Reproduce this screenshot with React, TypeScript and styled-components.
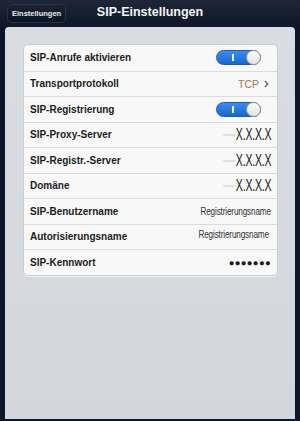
import React from "react";
import styled, { createGlobalStyle } from "styled-components";

const Global = createGlobalStyle`
  html, body { margin: 0; padding: 0; }
  body {
    width: 300px;
    height: 421px;
    overflow: hidden;
    background: #0d1629;
    font-family: "Liberation Sans", Arial, sans-serif;
  }
`;

type Row = {
  label: string;
  kind: "switch" | "link" | "ip" | "text" | "password";
  value?: string;
  raised?: boolean;
  trace?: boolean;
};

const rows: Row[] = [
  { label: "SIP-Anrufe aktivieren", kind: "switch" },
  { label: "Transportprotokoll", kind: "link", value: "TCP" },
  { label: "SIP-Registrierung", kind: "switch" },
  { label: "SIP-Proxy-Server", kind: "ip", value: "X.X.X.X", trace: true },
  { label: "SIP-Registr.-Server", kind: "ip", value: "X.X.X.X", trace: true },
  { label: "Domäne", kind: "ip", value: "X.X.X.X", trace: true },
  { label: "SIP-Benutzername", kind: "text", value: "Registrierungsname" },
  { label: "Autorisierungsname", kind: "text", value: "Registrierungsname", raised: true },
  { label: "SIP-Kennwort", kind: "password", value: "●●●●●●●" },
];

const App = () => {
  return (
    <S.Screen>
      <Global />
      <S.NavBar>
        <S.BackButton>Einstellungen</S.BackButton>
        <S.Title>SIP-Einstellungen</S.Title>
      </S.NavBar>
      <S.Panel>
        <S.Group>
          {rows.map((row) => (
            <S.Cell key={row.label}>
              <S.Label>{row.label}</S.Label>
              {row.kind === "switch" && (
                <S.Switch>
                  <S.SwitchMark />
                  <S.Knob />
                </S.Switch>
              )}
              {row.kind === "link" && (
                <S.LinkValue>
                  {row.value}
                  <S.Chevron viewBox="0 0 6 9">
                    <path d="M1 1 L4.5 4.5 L1 8" fill="none" stroke="#6b6b6b" strokeWidth="1.8" />
                  </S.Chevron>
                </S.LinkValue>
              )}
              {row.kind === "ip" && (
                <S.IpField>
                  {row.trace && <S.FieldTrace />}
                  <S.IpValue>{row.value}</S.IpValue>
                </S.IpField>
              )}
              {row.kind === "text" && <S.TextValue $raised={row.raised}>{row.value}</S.TextValue>}
              {row.kind === "password" && <S.Password>{row.value}</S.Password>}
            </S.Cell>
          ))}
        </S.Group>
      </S.Panel>
    </S.Screen>
  );
};

export default App;

const S = {
  Screen: styled.div`
    width: 300px;
    height: 421px;
    display: flex;
    flex-direction: column;
    background: #0d1629;
  `,
  NavBar: styled.div`
    height: 27px;
    flex-shrink: 0;
    display: flex;
    align-items: center;
    position: relative;
    padding: 0 0 0 7px;
    background: linear-gradient(#1f2737, #0e1627);
  `,
  BackButton: styled.div`
    height: 17px;
    padding: 0 4px;
    display: flex;
    align-items: center;
    border-radius: 5px;
    border: 1px solid #2a3344;
    background: linear-gradient(#1c2434, #0c1322);
    color: #e8ecf2;
    font-size: 7.5px;
    font-weight: bold;
  `,
  Title: styled.div`
    position: absolute;
    left: 0;
    right: 0;
    top: 5px;
    text-align: center;
    color: #f4f6fa;
    font-size: 12.5px;
    font-weight: bold;
    pointer-events: none;
  `,
  Panel: styled.div`
    flex: 1;
    margin: 0 5px 2px 5px;
    padding: 17px 17px 0 18px;
    border-radius: 4px 4px 0 0;
    background: linear-gradient(#d9dce1, #d3d6db);
  `,
  Group: styled.div`
    background: #f8f8f8;
    border-radius: 5px;
    border: 1px solid #c9ccd1;
    box-shadow: 0 1px 0 #eef0f2;
    overflow: hidden;
  `,
  Cell: styled.div`
    height: 25.5px;
    display: flex;
    align-items: center;
    justify-content: space-between;
    padding: 0 6px 0 6px;
    border-top: 1px solid #dcdcdc;
    box-sizing: border-box;
    &:first-child {
      border-top: none;
    }
  `,
  Label: styled.span`
    font-size: 10px;
    font-weight: bold;
    color: #1c1c1c;
  `,
  Switch: styled.div`
    width: 45px;
    height: 15px;
    margin-right: 10px;
    border-radius: 8px;
    position: relative;
    background: linear-gradient(#3c8df0, #1566d2);
    border: 1px solid #1a5cb8;
    box-sizing: border-box;
  `,
  SwitchMark: styled.div`
    position: absolute;
    left: 15px;
    top: 3px;
    width: 1.5px;
    height: 7px;
    background: #ffffff;
  `,
  Knob: styled.div`
    position: absolute;
    right: -1px;
    top: -1px;
    width: 15px;
    height: 15px;
    border-radius: 50%;
    background: linear-gradient(#ffffff, #e2e2e2);
    border: 1px solid #9a9a9a;
    box-sizing: border-box;
  `,
  LinkValue: styled.span`
    display: flex;
    align-items: center;
    gap: 5px;
    font-size: 10.5px;
    color: #a57a45;
    margin-right: 2px;
  `,
  Chevron: styled.svg`
    width: 5px;
    height: 8px;
  `,
  IpField: styled.div`
    display: flex;
    align-items: center;
  `,
  FieldTrace: styled.div`
    width: 13px;
    height: 2px;
    background: #e0e0e0;
    border-radius: 1px;
    margin-top: 1px;
  `,
  IpValue: styled.span`
    display: inline-block;
    font-size: 17px;
    line-height: 17px;
    color: #222;
    transform: scaleX(0.62);
    transform-origin: right center;
    letter-spacing: -0.3px;
    margin-left: -22px;
  `,
  TextValue: styled.span<{ $raised?: boolean }>`
    display: inline-block;
    font-size: 10px;
    color: #333;
    transform: scaleX(0.82);
    transform-origin: right center;
    margin-right: ${(p) => (p.$raised ? "2px" : "0")};
    margin-top: ${(p) => (p.$raised ? "-4px" : "0")};
    letter-spacing: -0.2px;
  `,
  Password: styled.span`
    font-size: 9.5px;
    color: #1c1c1c;
    letter-spacing: 0.3px;
  `,
};
